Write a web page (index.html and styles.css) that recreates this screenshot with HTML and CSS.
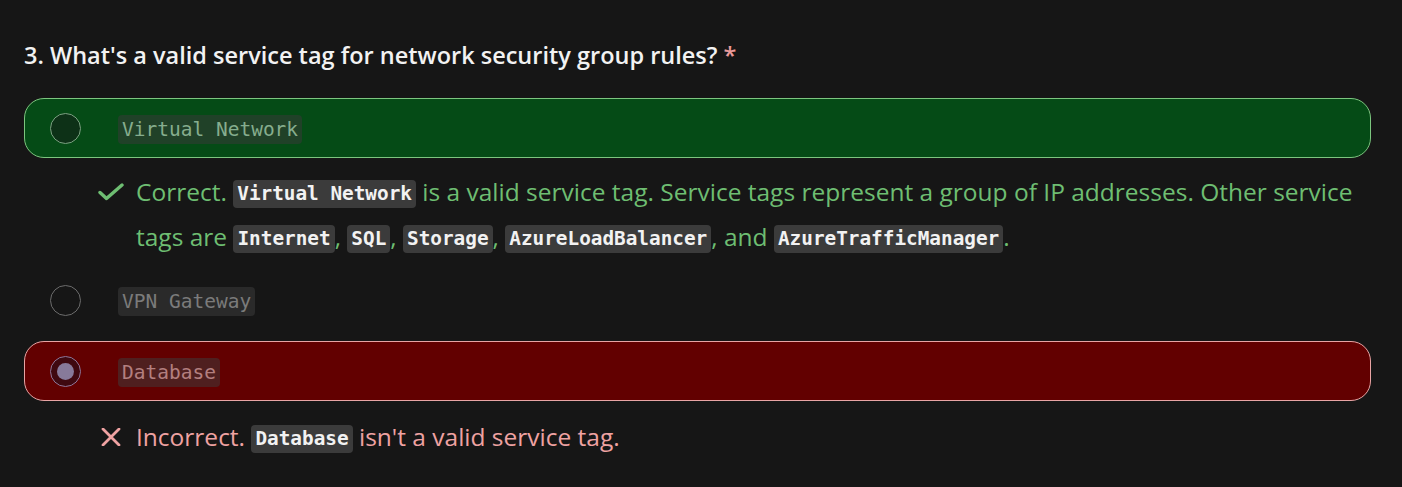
FILE: index.html
```html
<!DOCTYPE html>
<html lang="en">
<head>
<meta charset="utf-8">
<title>Quiz question</title>
<link rel="stylesheet" href="styles.css">
</head>
<body>
<div class="question">
  <h2 class="title">3. What's a valid service tag for network security group rules? <span class="req">*</span></h2>
  <div class="options">
    <div class="option option-correct">
      <span class="radio"></span>
      <code class="label">Virtual Network</code>
    </div>
    <div class="feedback feedback-correct">
      <svg class="fb-icon" width="26" height="18" viewBox="0 0 26 18"><path d="M2 9.5 L8.5 15.5 L24 2" fill="none" stroke="currentColor" stroke-width="3.4" stroke-linecap="round" stroke-linejoin="round"/></svg>
      <p class="fb-text"><span>Correct.</span> <code>Virtual Network</code> <span>is a valid service tag. Service tags represent a group of IP addresses. Other service</span> <span>tags are</span> <code>Internet</code>, <code>SQL</code>, <code>Storage</code>, <code>AzureLoadBalancer</code>, and <code>AzureTrafficManager</code>.</p>
    </div>
    <div class="option">
      <span class="radio"></span>
      <code class="label">VPN Gateway</code>
    </div>
    <div class="option option-wrong">
      <span class="radio radio-checked"></span>
      <code class="label">Database</code>
    </div>
    <div class="feedback feedback-wrong">
      <svg class="fb-icon" width="26" height="18" viewBox="0 0 26 18"><path d="M5 1 L21 17 M21 1 L5 17" fill="none" stroke="currentColor" stroke-width="2.8" stroke-linecap="round"/></svg>
      <p class="fb-text">Incorrect. <code>Database</code> isn't a valid service tag.</p>
    </div>
  </div>
</div>
</body>
</html>
```

FILE: styles.css
```css
html, body {
  margin: 0;
  padding: 0;
  background: #161616;
}
body {
  font-family: "Open Sans", "Noto Sans", sans-serif;
  color: #e6e6e6;
}
.question {
  padding: 40px 31px 0 24px;
}
.title {
  margin: 0 0 28px;
  font-size: 23.5px;
  line-height: 30px;
  font-weight: 600;
  color: #f2f2f2;
}
.req {
  color: #e99a9a;
}
.options {
  display: flex;
  flex-direction: column;
}
.option {
  height: 60px;
  box-sizing: border-box;
  border: 1px solid transparent;
  border-radius: 20px;
  display: flex;
  align-items: center;
  padding-left: 25px;
  margin-bottom: 11px;
}
.option-correct {
  background: #054b16;
  border-color: #7cc67f;
}
.option-wrong {
  background: #620000;
  border-color: #e8a4a4;
}
.radio {
  width: 31px;
  height: 31px;
  box-sizing: border-box;
  border-radius: 50%;
  border: 1px solid #6c6c6c;
  background: #161616;
  margin-right: 37px;
  flex: none;
}
.option-correct .radio {
  background: #0d3117;
  border-color: #7ba181;
}
.radio-checked {
  position: relative;
}
.option-wrong .radio {
  background: #3f0910;
  border-color: #8e7699;
}
.radio-checked::after {
  content: "";
  position: absolute;
  left: 6px;
  top: 6px;
  width: 17px;
  height: 17px;
  border-radius: 50%;
  background: #877a9a;
}
.label {
  font-family: "DejaVu Sans Mono", monospace;
  font-size: 19.5px;
  line-height: 29px;
  padding: 0 4px;
  border-radius: 4px;
  background: #2a2a2a;
  color: #7b7b7b;
  margin-top: 2px;
}
.option-correct .label {
  background: #204128;
  color: #86ad8e;
}
.option-wrong .label {
  background: #4f1f1f;
  color: #b37f7f;
}
.feedback {
  display: flex;
  align-items: flex-start;
  padding-left: 74px;
  margin: 0 0 11px;
}
.feedback-correct {
  color: #6ebe72;
}
.feedback-wrong {
  color: #efa2a2;
  margin-top: 2px;
}
.fb-icon {
  flex: none;
  margin-top: 14px;
  margin-right: 12px;
}
.fb-text {
  margin: 0;
  font-size: 24.5px;
  line-height: 45px;
}
.fb-text code {
  font-family: "DejaVu Sans Mono", monospace;
  font-weight: bold;
  font-size: 19.35px;
  line-height: 28px;
  display: inline-block;
  padding: 0 4px;
  border-radius: 4px;
  background: #3b3b3b;
  color: #f2f2f2;
  vertical-align: 1px;
}
```
